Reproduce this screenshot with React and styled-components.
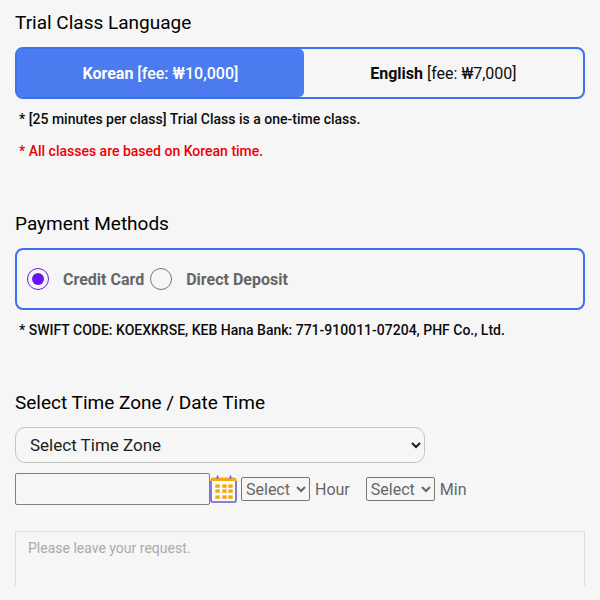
// dependencies
import { useState } from "react";
import styled, { createGlobalStyle } from "styled-components";

// styled styling //
const GlobalStyle = createGlobalStyle`
  * {
    box-sizing: border-box;
  }
  body {
    margin: 0;
    background-color: #f6f6f6;
    color: #0c0c0c;
    font-family: Roboto, "Noto Sans CJK KR", sans-serif;
  }
  button, input, select, textarea {
    font-family: inherit;
  }
`;

const Form = styled.form`
  padding: 11px 15px 14px;
`;

const Section = styled.section`
  margin-bottom: ${props => props.$last ? "0" : "45px"};

  h2 {
    margin: 0 0 12px;
    color: black;
    font-size: 19px;
    font-weight: 400;
    line-height: 24px;
  }
`;

const Tabs = styled.div`
  display: flex;
  height: 52px;
  margin-bottom: 4px;
  border: 2px solid #3d70ee;
  border-radius: 8px;
`;

const Tab = styled.button`
  flex: ${props => props.$wide ? "36" : "35"};
  border: 0;
  border-radius: 5px;
  background-color: ${props => props.$active ? "#4b7bee" : "transparent"};
  color: ${props => props.$active ? "white" : "#0c0c0c"};
  font-size: 16px;
  font-weight: ${props => props.$active ? "500" : "400"};
  cursor: pointer;

  strong {
    font-weight: 700;
  }
`;

const Note = styled.p`
  margin: 0;
  padding-left: 4px;
  color: ${props => props.$warning ? "#ec0006" : "#0c0c0c"};
  font-size: 14px;
  font-weight: 500;
  line-height: 32px;
`;

const PaymentBox = styled.div`
  display: flex;
  align-items: center;
  gap: 6px;
  height: 62px;
  margin-bottom: 4px;
  padding: 0 10px;
  border: 2px solid #3d70ee;
  border-radius: 8px;
`;

const RadioLabel = styled.label`
  display: flex;
  align-items: center;
  gap: 14px;
  color: #666;
  font-size: 16px;
  font-weight: 700;
`;

const Radio = styled.input`
  appearance: none;
  display: grid;
  place-items: center;
  width: 22px;
  height: 22px;
  margin: 0;
  border: 1px solid #777;
  border-radius: 50%;

  &:checked {
    border-color: #6a1bea;
  }
  &:checked::before {
    content: "";
    width: 12px;
    height: 12px;
    border-radius: 50%;
    background-color: #6a12f0;
  }
`;

const ZoneSelect = styled.select`
  display: block;
  width: 72%;
  height: 36px;
  margin-bottom: 10px;
  padding: 0 0 0 10px;
  border: 1px solid #c4c4c4;
  border-radius: 10px;
  background-color: transparent;
  color: #1c1c1c;
  font-size: 17px;
`;

const DateRow = styled.div`
  display: flex;
  align-items: center;
  height: 32px;
  margin-bottom: 26px;
`;

const DateInput = styled.input`
  width: 195px;
  height: 32px;
  border: 1px solid #808080;
  border-radius: 2px;
  background-color: transparent;
  font-size: 16px;
`;

const CalendarButton = styled.button`
  display: flex;
  margin-right: 4px;
  padding: 0;
  border: 0;
  background: none;
  cursor: pointer;
`;

const TimeLabel = styled.label`
  display: flex;
  align-items: center;
  gap: 5px;
  margin-right: 16px;
  color: #666;
  font-size: 16px;

  select {
    width: 69px;
    height: 24px;
    padding: 0;
    border: 1px solid #777;
    border-radius: 2px;
    background-color: transparent;
    color: #666;
    font-size: 16px;
  }
`;

const Request = styled.textarea`
  display: block;
  width: 100%;
  height: 55px;
  padding: 8px 12px;
  border: 1px solid #e0e0e0;
  border-bottom: 0;
  background-color: transparent;
  font-size: 14px;
  resize: none;

  &::placeholder {
    color: #aaa;
  }
`;

const CalendarIcon = () => (
  <svg width="27" height="28" viewBox="0 0 27 28" fill="none" aria-hidden="true">
    <path d="M1 6V25.5Q1 27 2.5 27H24.5Q26 27 26 25.5V6" fill="#fafafa" stroke="#6657d2" strokeWidth="1.6" />
    <path d="M0.5 6V4.5Q0.5 2.5 2.5 2.5H24.5Q26.5 2.5 26.5 4.5V6Z" fill="#f5ab0c" />
    <path d="M7.5 0.5V4M20.5 0.5V4" stroke="#6657d2" strokeWidth="1.6" />
    {[9, 14, 20].map(y => [5, 12, 18].map(x => (
      <rect key={`${x}-${y}`} x={x + 0.3} y={y + 0.4} width="4.4" height="3.4" fill="#f2a90f" />
    )))}
  </svg>
);

const hours = Array.from({ length: 24 }, (_, i) => i);
const minutes = ["00", "30"];

const App = () => {
  const [language, setLanguage] = useState("korean");

  return (
    <>
      <GlobalStyle />
      <Form>
        <Section>
          <h2>Trial Class Language</h2>
          <Tabs>
            <Tab
              type="button"
              $wide
              $active={language === "korean"}
              onClick={() => setLanguage("korean")}
            >
              <strong>Korean</strong> [fee: ₩10,000]
            </Tab>
            <Tab
              type="button"
              $active={language === "english"}
              onClick={() => setLanguage("english")}
            >
              <strong>English</strong> [fee: ₩7,000]
            </Tab>
          </Tabs>
          <Note>* [25 minutes per class] Trial Class is a one-time class.</Note>
          <Note $warning>* All classes are based on Korean time.</Note>
        </Section>

        <Section>
          <h2>Payment Methods</h2>
          <PaymentBox>
            <RadioLabel>
              <Radio type="radio" name="payment" value="card" defaultChecked />
              Credit Card
            </RadioLabel>
            <RadioLabel>
              <Radio type="radio" name="payment" value="deposit" />
              Direct Deposit
            </RadioLabel>
          </PaymentBox>
          <Note>* SWIFT CODE: KOEXKRSE, KEB Hana Bank: 771-910011-07204, PHF Co., Ltd.</Note>
        </Section>

        <Section $last>
          <h2>Select Time Zone / Date Time</h2>
          <ZoneSelect aria-label="Time zone">
            <option>Select Time Zone</option>
          </ZoneSelect>
          <DateRow>
            <DateInput type="text" aria-label="Date" />
            <CalendarButton type="button" aria-label="Open calendar">
              <CalendarIcon />
            </CalendarButton>
            <TimeLabel>
              <select>
                <option>Select</option>
                {hours.map(hour => <option key={hour}>{hour}</option>)}
              </select>
              Hour
            </TimeLabel>
            <TimeLabel>
              <select>
                <option>Select</option>
                {minutes.map(minute => <option key={minute}>{minute}</option>)}
              </select>
              Min
            </TimeLabel>
          </DateRow>
          <Request aria-label="Request" placeholder="Please leave your request." />
        </Section>
      </Form>
    </>
  );
};

export default App;
